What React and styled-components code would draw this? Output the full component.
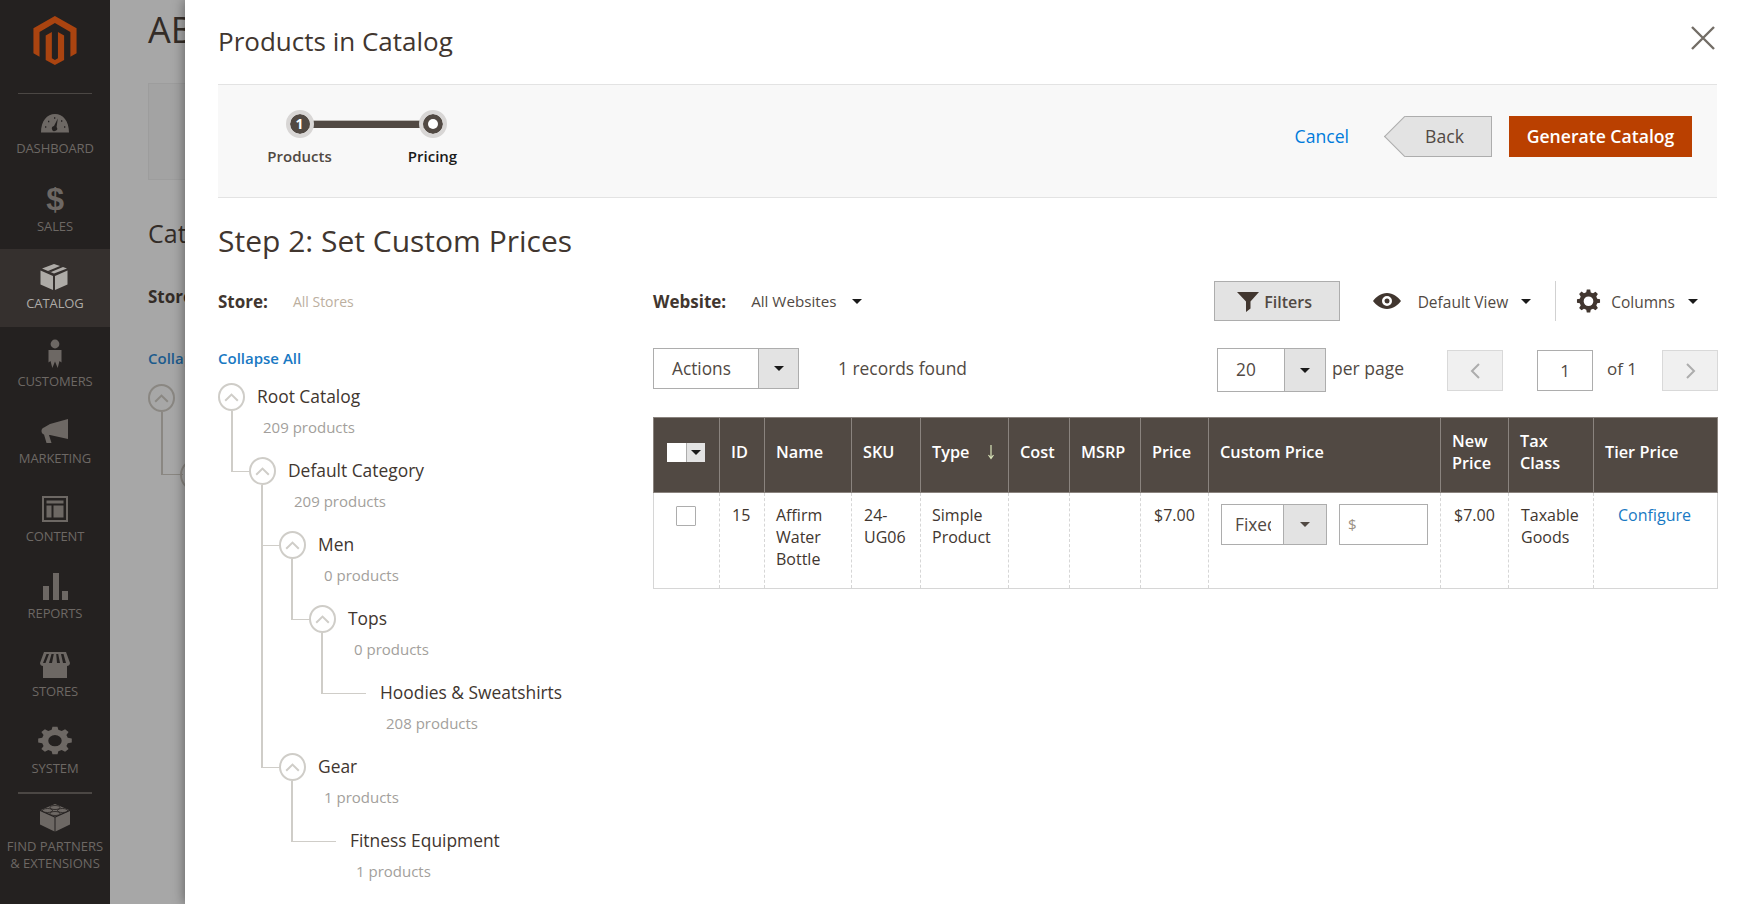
import React from "react";
import styled, { createGlobalStyle } from "styled-components";

const Global = createGlobalStyle`
  html, body { margin: 0; padding: 0; height: 100%; overflow: hidden; }
  body { font-family: "Open Sans", "Liberation Sans", sans-serif; color: #41362f; }
  #root { height: 100%; }
  * { box-sizing: border-box; }
`;

const Page = styled.div`
  position: relative; width: 1749px; height: 904px; overflow: hidden;
  display: flex; background: #a7a7a7;
`;
const Sidebar = styled.nav`
  width: 110px; flex: none; background: #242120; display: flex; flex-direction: column; align-items: stretch;
`;
const LogoWrap = styled.div`
  height: 94px; padding-top: 16px; display: flex; justify-content: center; position: relative;
  &::after { content: ""; position: absolute; left: 18px; right: 18px; bottom: 0; height: 1px; background: #4b4744; }
`;
const NavItem = styled.a`
  height: ${p => p.$tall ? "auto" : "77.5px"};
  display: flex; flex-direction: column; align-items: center; justify-content: flex-end;
  padding-bottom: ${p => p.$tall ? "0" : "14.5px"};
  margin-top: ${p => p.$tall ? "3px" : "0"};
  font-size: 13px; line-height: 17px; letter-spacing: ${p => p.$tall ? "0" : "-0.1px"}; text-align: center; text-transform: uppercase;
  color: ${p => p.$active ? "#aeaba7" : "#6d6864"};
  background: ${p => p.$active ? "#35302e" : "transparent"};
  svg { display: block; margin-bottom: ${p => p.$tall ? "6px" : "4px"}; }
`;
const NavDivider = styled.div`
  height: 2px; margin: 0 18px 5px; background: #4b4744;
`;
const Dollar = styled.span`
  font-family: "Liberation Sans", sans-serif; font-weight: 700; font-size: 32px; line-height: 32px; margin-bottom: 3px;
  color: inherit;
`;

const Behind = styled.main`
  flex: 1; padding: 0 0 0 38px; min-width: 0; color: #332c27;
`;
const BehindTitle = styled.div`
  font-size: 36px; line-height: 48px; padding-top: 6px; height: 83px; white-space: nowrap;
`;
const BehindBar = styled.div`
  height: 97px; background: #a3a3a3; border: 1px solid #9d9d9d; border-right: 0;
`;
const BehindHeading = styled.div`
  font-size: 25px; line-height: 34px; margin-top: 36px; font-weight: 500;
`;
const BehindStore = styled.div`
  font-size: 17px; font-weight: 700; line-height: 22px; margin-top: 36px;
`;
const BehindLink = styled.div`
  font-size: 15px; font-weight: 600; line-height: 20px; margin-top: 40px; color: #1c5b8d;
`;
const BehindTree = styled.div`
  position: relative; margin-top: 16px; width: 27px; height: 28px; border: 2px solid #8a8782; border-radius: 50%;
  display: flex; align-items: center; justify-content: center;
  &::before { content: ""; position: absolute; left: 30px; top: 73px; width: 27px; height: 28px; border: 2px solid #8a8782; border-radius: 50%; }
  &::after { content: ""; position: absolute; left: 11px; top: 26px; width: 20px; height: 62px; border-left: 2px solid #8a8782; border-bottom: 1px solid #8a8782; }
`;

const Modal = styled.section`
  position: absolute; left: 185px; top: 0; right: 0; bottom: 0; background: #fff;
  padding: 0 32px 0 33px; box-shadow: 0 0 12px rgba(0,0,0,.45);
`;
const ModalHeader = styled.header`
  height: 84px; display: flex; align-items: center; padding-bottom: 2px;
`;
const ModalTitle = styled.h1`
  margin: 0; font-size: 26px; font-weight: 400; line-height: 36px; color: #41362f;
`;
const Close = styled.button`
  position: absolute; top: 25px; right: 33px; width: 26px; height: 26px; padding: 0; border: 0; background: none;
`;
const WizardBar = styled.div`
  height: 114px; background: #f8f8f8; border-top: 1px solid #e3e3e3; border-bottom: 1px solid #e3e3e3;
  display: flex; align-items: flex-start; justify-content: space-between; padding: 25px 25px 0 15px;
`;
const Steps = styled.div`
  display: flex; position: relative;
  &::before { content: ""; position: absolute; left: 66px; top: 10px; width: 133px; height: 7px; background: #514943; border-top: 1px solid #bdbab6; }
`;
const Step = styled.div`
  width: 133px; display: flex; flex-direction: column; align-items: center; gap: 8px;
  font-size: 15px; font-weight: 600; line-height: 20px; color: ${p => p.$current ? "#1a1a1a" : "#514943"};
`;
const Dot = styled.span`
  position: relative; width: 28px; height: 28px; border-radius: 50%; background: #514943;
  border: 4px solid #d8d6d5; color: #fff; font-size: 14px; font-weight: 700; line-height: 20px; text-align: center;
  background-clip: padding-box;
  ${p => p.$current && `&::after { content: ""; position: absolute; left: 5px; top: 5px; width: 10px; height: 10px; background: #fff; border-radius: 50%; }`}
`;
const WizardActions = styled.div`
  display: flex; align-items: center; margin-top: 6px;
`;
const CancelLink = styled.a`
  font-size: 17.6px; line-height: 38px; padding-bottom: 2px; color: #007bdb; margin-right: 34px;
`;
const BackButton = styled.button`
  position: relative; width: 88px; height: 41px; margin-left: 21px; margin-right: 17px; padding: 0 6px 2px 0;
  background: #e3e3e3; border: 1px solid #adadad; border-left: 0; font: inherit; font-size: 17.6px; color: #514943;
  &::before {
    content: ""; position: absolute; left: -14px; top: 5px; width: 28px; height: 28px; background: #e3e3e3;
    border-left: 1px solid #adadad; border-bottom: 1px solid #adadad; transform: rotate(45deg);
  }
  span { position: relative; }
`;
const PrimaryButton = styled.button`
  height: 41px; width: 183px; padding: 0 0 2px; background: #ba4000; border: 1px solid #ba4000; color: #fff;
  font: inherit; font-size: 17.6px; font-weight: 600;
`;

const StepTitle = styled.h2`
  margin: 0; height: 83px; padding-top: 23px; font-size: 30px; font-weight: 400; line-height: 40px; color: #41362f;
`;
const Columns = styled.div`
  display: grid; grid-template-columns: 435px 1fr;
`;
const LeftColumn = styled.div`
  min-width: 0;
`;
const ScopeRow = styled.div`
  height: 40px; display: flex; align-items: center;
`;
const ScopeLabel = styled.strong`
  font-size: 17px; font-weight: 700; color: #41362f;
`;
const StoreValue = styled.span`
  margin-left: 25px; font-size: 14px; color: #bcaf9f;
`;
const CollapseAll = styled.a`
  display: block; margin-top: 27px; height: 35px; font-size: 15px; font-weight: 600; line-height: 20px; color: #1979c3;
`;
const Tree = styled.ul`
  list-style: none; margin: 0; padding: 0;
`;
const ChildList = styled.ul`
  list-style: none; margin: 0; padding: 0 0 0 ${p => p.$root ? 31 : 30}px;
`;
const Node = styled.li`
  position: relative;
  ${p => p.$child && `
    &::before {
      content: ""; position: absolute; left: -18px; top: -46px; height: 60px;
      width: ${p.$leaf ? "43px" : "18px"};
      border-left: 2px solid #cfcdc8; border-bottom: 1px solid #cfcdc8;
    }
  `}
  ${p => p.$child && !p.$last && `
    &::after { content: ""; position: absolute; left: -18px; top: 14px; bottom: 0; border-left: 2px solid #cfcdc8; }
  `}
`;
const NodeHead = styled.div`
  height: 28px; display: flex; align-items: center; gap: ${p => p.$leaf ? 14 : 12}px;
  font-size: 17.4px; color: #41362f; white-space: nowrap;
`;
const Toggle = styled.span`
  position: relative; width: 27px; height: 28px; flex: none; border-radius: 50%;
  border: 2px solid ${p => p.$hidden ? "transparent" : "#cfcdc8"}; background: ${p => p.$hidden ? "transparent" : "#fff"};
  z-index: 1; display: flex; align-items: center; justify-content: center;
`;
const NodeText = styled.span`
  margin-top: -3px;
`;
const NodeCount = styled.div`
  height: 46px; padding: 6px 0 0 ${p => p.$leaf ? 47 : 45}px; font-size: 15px; line-height: 20px; color: #a39f9c; white-space: nowrap;
`;

const WebsiteRow = styled.div`
  height: 40px; display: flex; align-items: center;
`;
const WebsiteValue = styled.span`
  margin-left: 25px; font-size: 15.2px; color: #514943;
`;
const Caret = styled.span`
  display: inline-block; width: 0; height: 0; flex: none; border-style: solid;
  border-width: 5px 5px 0 5px; border-color: ${p => p.$c || "#1a1a1a"} transparent transparent transparent;
`;
const InlineCaret = styled(Caret)`
  margin-left: ${p => p.$gap || 16}px;
`;
const Spacer = styled.div` flex: 1; `;
const FiltersButton = styled.button`
  width: 126px; height: 40px; display: flex; align-items: center; justify-content: center; gap: 4px; padding: 1px 5px 0 0;
  background: #e3e3e3; border: 1px solid #adadad; font: inherit; font-size: 16px; font-weight: 600; color: #514943;
  margin-right: 32px;
`;
const ToolItem = styled.span`
  display: flex; align-items: center; font-size: 15.5px; color: #514943;
`;
const ToolDivider = styled.span`
  width: 1px; height: 40px; background: #d1d1d1; margin: 0 20px 0 24px;
`;
const ToolLabel = styled.span`
  margin-left: ${p => p.$gap}px; padding-top: 2px;
`;
const ToolEnd = styled.span` width: 20px; flex: none; `;
const PagerGap = styled.span` width: 43px; flex: none; `;
const ActionsRow = styled.div`
  margin-top: 27px; height: 44px; display: flex; align-items: flex-start; margin-bottom: 25px;
`;
const SelectBox = styled.div`
  display: flex; width: ${p => p.$w}px; height: ${p => p.$h}px; border: 1px solid #adadad; background: #fff; flex: none;
`;
const SelectValue = styled.div`
  flex: 1; min-width: 0; overflow: hidden; white-space: nowrap; padding-left: ${p => p.$pad}px;
  font-size: 17.3px; line-height: ${p => p.$h - 2}px; color: #514943;
  margin-right: ${p => p.$clip || 0}px;
`;
const SelectArrow = styled.div`
  width: ${p => p.$w}px; flex: none; background: #e3e3e3; border-left: 1px solid #adadad;
  display: flex; align-items: center; justify-content: center;
`;
const RecordsText = styled.span`
  margin-left: 39px; font-size: 17.4px; line-height: 41px; color: #514943;
`;
const PerPage = styled.span`
  margin-left: 6px; font-size: 17.5px; line-height: 41px; color: #514943;
`;
const PagerButton = styled.button`
  width: 56px; height: 41px; margin-top: 2px; background: #f0f0f0; border: 1px solid #d9d9d9; padding: 0;
  display: flex; align-items: center; justify-content: center; flex: none;
`;
const PageInput = styled.div`
  width: 56px; height: 41px; margin: 2px 0 0 34px; border: 1px solid #adadad; background: #fff; text-align: center;
  font-size: 17px; line-height: 39px; color: #514943; flex: none;
`;
const OfText = styled.span`
  margin: 0 23px 0 14px; font-size: 17px; line-height: 41px; color: #514943; white-space: nowrap; width: 32px;
`;
const Table = styled.table`
  width: 1064px; table-layout: fixed; border-collapse: collapse; font-size: 16px; line-height: 22px;
`;
const Th = styled.th`
  height: 75px; background: #514943; color: #fff; text-align: left; font-weight: 600; font-size: 16.3px;
  padding: 0 6px 6px 11px; border: 1px solid #8a837e; white-space: pre-line; position: relative;
`;
const Td = styled.td`
  height: 96px; vertical-align: top; padding: 11px 6px 0 12px; border: 1px dashed #d6d6d6; color: #41362f;
  border-top: 0; border-bottom: 1px solid #d6d6d6;
  &:first-child { border-left: 1px solid #d6d6d6; }
  &:last-child { border-right: 1px solid #d6d6d6; }
`;
const NameTd = styled(Td)`
  padding-left: 11px;
`;
const PriceTd = styled(Td)`
  padding-left: 13px;
`;
const CenterTd = styled(Td)`
  text-align: center; padding-left: 6px; padding-right: 8px;
`;
const MultiCheck = styled.div`
  display: flex; width: 38px; height: 19px; margin-left: 2px; background: #fff; 
`;
const MultiArrow = styled.div`
  margin-left: auto; width: 19px; height: 19px; background: #e3e3e3; border: 1px solid #adadad; border-width: 0 0 0 1px;
  display: flex; align-items: center; justify-content: center;
`;
const Check = styled.div`
  width: 20px; height: 20px; margin: 2px 0 0 10px; border: 1px solid #adadad; background: #fff; border-radius: 1px;
`;
const SortIcon = styled.svg`
  position: absolute; right: 13px; top: 26px;
`;
const PriceControls = styled.div`
  display: flex; gap: 12px; margin: 0;
`;
const PriceInput = styled.div`
  width: 89px; height: 41px; border: 1px solid #adadad; padding-left: 8px; font-size: 15px; line-height: 39px; color: #9a8f83;
`;
const Link = styled.a` color: #1979c3; `;

const Chevron = ({ c = "#cfcdc8" }) => (
  <svg width="15" height="9" viewBox="0 0 15 9"><path d="M1.200 7.800 7.500 1.600l6.300 6.200" fill="none" stroke={c} strokeWidth="2" /></svg>
);

const TreeNode = ({ name, count, child, last, leaf, root, children }) => (
  <Node $child={child} $last={last} $leaf={leaf}>
    <NodeHead $leaf={leaf}>
      <Toggle $hidden={leaf}>{!leaf && <Chevron />}</Toggle>
      <NodeText>{name}</NodeText>
    </NodeHead>
    <NodeCount $leaf={leaf}>{count} products</NodeCount>
    {children && <ChildList $root={root}>{children}</ChildList>}
  </Node>
);

const I = ({ w = 44, h = 30, vb, children }) => (
  <svg width={w} height={h} viewBox={vb || `0 0 ${w} ${h}`} fill="currentColor">{children}</svg>
);

const navItems = [
  ["Dashboard", <I key="d"><path fillRule="evenodd" d="M8 26.500C8 15 14 8 22 8s14 7 14 18.500zM21 20l3.800-7.500-1.200 8.500a2.600 2.600 0 1 1-2.600-1z" /><path d="M12 21h1.400M15 15.500h1.400M21 12h1.400M28 15h1.400M31 21h1.400" stroke="#242120" strokeWidth="1.300" strokeDasharray="1.300 1" /></I>],
  ["Sales", <Dollar key="s">$</Dollar>],
  ["Catalog", <I key="c"><path d="M21 3 9 7.500l12 5 13-5-4-1.500-12 5-3-1 12-5zM7.500 9.500v14l12.500 5.500V15zM22 15v14l12.500-5.500v-14z" /></I>],
  ["Customers", <I key="cu"><circle cx="22" cy="5" r="4.400" /><path d="M15.500 11h13v12.500l-2-1.500-1.800 7-2.700-6.500-2.700 6.500-1.800-7-2 1.500z" /></I>],
  ["Marketing", <I key="m"><path d="M35 3v20l-18-4h-1l2.500 8h-5l-2.500-8.500c-1.500-.4-2.500-1.800-2.500-3.500s1-3 2.500-3.500L17 8z" /></I>],
  ["Content", <I key="co"><path fillRule="evenodd" d="M9 2h26v26H9zm2 2v22h22V4zm2.500 2.500h17v3h-17zm0 5h5v12h-5zm7 0h10v12h-10z" /></I>],
  ["Reports", <I key="r"><path d="M10 15h6v14h-6zM20 2h6v27h-6zM29 20h6v9h-6z" /></I>],
  ["Stores", <I key="st"><path fillRule="evenodd" d="M11 3h22l4 11c0 2-1.500 3-3 3v12H10V17c-1.500 0-3-1-3-3zm2.500 2L10 14h2.500l3.500-9zm5 0L16 14h3l1.800-9zm4.700 0L24 14h3l-1.800-9zm4.800 0L30 14h3l-2.500-9z" /></I>],
  ["System", <I key="sy"><path fillRule="evenodd" d="M19 1h6l1 4.500 4 1.600 4-2.600 4.200 4.200-2.600 4 1.600 4 4.800 1v6l-4.800 1-1.600 4 2.600 4-4.200 4.200-4-2.600-4 1.600-1 4.500h-6l-1-4.500-4-1.600-4 2.600-4.200-4.200 2.600-4-1.600-4-4.800-1v-6l4.800-1 1.600-4-2.600-4L10 4.500l4 2.600 4-1.600zM22 13a8 8 0 1 0 0 16 8 8 0 0 0 0-16z" transform="translate(3.500 0) scale(.84 .7)" /></I>],
];

const Logo = () => (
  <svg width="44" height="49" viewBox="0 0 44 50" fill="#aa4410">
    <path d="M21.900 0 0 12.600V37.900l6.200 3.600V16.300l15.700-9.100 15.800 9.100V41.500l6.300-3.600V12.600z" />
    <path d="M25 43l-3.100 1.800L18.800 43V16.300l-6.300 3.600V44.800L21.900 50l9.400-5.200V19.900L25 16.300z" />
  </svg>
);

const Lego = () => (
  <I><path d="M22.500 15.500 37 9v13.500L22.500 29.500zM21.500 15.500v14L7 22.500V9zM8 8l14-6 14 6-14 6.500z" /><path d="M17 5.500c0-1.200 2.200-2 5-2s5 .8 5 2-2.200 2-5 2-5-.8-5-2zM24.500 8.500c0-1.200 2.200-2 5-2s5 .8 5 2-2.200 2-5 2-5-.8-5-2zM9.500 8.500c0-1.200 2.200-2 5-2s5 .8 5 2-2.200 2-5 2-5-.8-5-2zM17 11.500c0-1.200 2.200-2 5-2s5 .8 5 2-2.200 2-5 2-5-.8-5-2z" stroke="#242120" strokeWidth=".8" /></I>
);

const columns = [66, 45, 87, 69, 88, 61, 71, 68, 232, 68, 85, 124];

export default function App() {
  return (
    <Page>
      <Global />
      <Sidebar>
        <LogoWrap><Logo /></LogoWrap>
        {navItems.map(([label, icon]) => (
          <NavItem key={label} $active={label === "Catalog"}>{icon}{label}</NavItem>
        ))}
        <NavDivider />
        <NavItem $tall><Lego />Find Partners<br />&amp; Extensions</NavItem>
      </Sidebar>

      <Behind>
        <BehindTitle>AB</BehindTitle>
        <BehindBar />
        <BehindHeading>Cat</BehindHeading>
        <BehindStore>Store</BehindStore>
        <BehindLink>Collapse</BehindLink>
        <BehindTree><Chevron c="#8a8782" /></BehindTree>
      </Behind>

      <Modal>
        <ModalHeader><ModalTitle>Products in Catalog</ModalTitle></ModalHeader>
        <Close aria-label="Close">
          <svg width="26" height="26" viewBox="0 0 26 26"><path d="M2 2l22 22M24 2 2 24" stroke="#736d66" strokeWidth="2.400" /></svg>
        </Close>
        <WizardBar>
          <Steps>
            <Step><Dot>1</Dot>Products</Step>
            <Step $current><Dot $current />Pricing</Step>
          </Steps>
          <WizardActions>
            <CancelLink>Cancel</CancelLink>
            <BackButton><span>Back</span></BackButton>
            <PrimaryButton>Generate Catalog</PrimaryButton>
          </WizardActions>
        </WizardBar>
        <StepTitle>Step 2: Set Custom Prices</StepTitle>
        <Columns>
          <LeftColumn>
            <ScopeRow>
              <ScopeLabel>Store:</ScopeLabel>
              <StoreValue>All Stores</StoreValue>
            </ScopeRow>
            <CollapseAll>Collapse All</CollapseAll>
            <Tree>
              <TreeNode root name="Root Catalog" count="209">
                <TreeNode child last name="Default Category" count="209">
                  <TreeNode child name="Men" count="0">
                    <TreeNode child last name="Tops" count="0">
                      <TreeNode child last leaf name="Hoodies & Sweatshirts" count="208" />
                    </TreeNode>
                  </TreeNode>
                  <TreeNode child last name="Gear" count="1">
                    <TreeNode child last leaf name="Fitness Equipment" count="1" />
                  </TreeNode>
                </TreeNode>
              </TreeNode>
            </Tree>
          </LeftColumn>
          <div>
            <WebsiteRow>
              <ScopeLabel>Website:</ScopeLabel>
              <WebsiteValue>All Websites</WebsiteValue>
              <InlineCaret />
              <Spacer />
              <FiltersButton>
                <svg width="24" height="22" viewBox="0 0 24 22"><path d="M1 1h22l-8.500 9.500v7L10 21v-10.500z" fill="#41362f" /></svg>
                Filters
              </FiltersButton>
              <ToolItem>
                <svg width="30" height="18" viewBox="0 0 30 18"><path fillRule="evenodd" d="M15 1c6 0 11 4 14 8-3 4-8 8-14 8S4 13 1 9c3-4 8-8 14-8zm0 3a5 5 0 1 0 0 10 5 5 0 0 0 0-10zm0 2.500a2.500 2.500 0 1 1 0 5 2.500 2.500 0 0 1 0-5z" fill="#41362f" /></svg>
                <ToolLabel $gap={16}>Default View</ToolLabel>
                <InlineCaret $gap={13} />
              </ToolItem>
              <ToolDivider />
              <ToolItem>
                <svg width="25" height="25" viewBox="0 0 44 44"><path fillRule="evenodd" fill="#41362f" d="M19 1h6l1 5 4 1.600 4.300-2.800 4.200 4.200-2.800 4.300L37.300 17l5 1v6l-5 1-1.600 4 2.800 4.300-4.200 4.200-4.300-2.800-4 1.600-1 5h-6l-1-5-4-1.600-4.300 2.800-4.200-4.200 2.800-4.300L6.700 25l-5-1v-6l5-1 1.600-4-2.800-4.300L9.700 4.500 14 7.300l4-1.600zM22 13a8.500 8.500 0 1 0 0 17 8.500 8.500 0 0 0 0-17z" /></svg>
                <ToolLabel $gap={10}>Columns</ToolLabel>
                <InlineCaret $gap={13} />
              </ToolItem>
              <ToolEnd />
            </WebsiteRow>
            <ActionsRow>
              <SelectBox $w={146} $h={41}>
                <SelectValue $pad={18} $h={41}>Actions</SelectValue>
                <SelectArrow $w={40}><Caret /></SelectArrow>
              </SelectBox>
              <RecordsText>1 records found</RecordsText>
              <Spacer />
              <SelectBox $w={109} $h={44}>
                <SelectValue $pad={18} $h={44}>20</SelectValue>
                <SelectArrow $w={41}><Caret /></SelectArrow>
              </SelectBox>
              <PerPage>per page</PerPage>
              <PagerGap />
              <PagerButton><svg width="12" height="20" viewBox="0 0 12 20"><path d="M10 3 3 10l7 7" fill="none" stroke="#adadad" strokeWidth="2" /></svg></PagerButton>
              <PageInput>1</PageInput>
              <OfText>of 1</OfText>
              <PagerButton><svg width="12" height="20" viewBox="0 0 12 20"><path d="m3 3 7 7-7 7" fill="none" stroke="#adadad" strokeWidth="2" /></svg></PagerButton>
            </ActionsRow>
            <Table>
              <colgroup>{columns.map((c, i) => <col key={i} width={c} />)}</colgroup>
              <thead>
                <tr>
                  <Th><MultiCheck><MultiArrow><Caret /></MultiArrow></MultiCheck></Th>
                  <Th>ID</Th>
                  <Th>Name</Th>
                  <Th>SKU</Th>
                  <Th>Type
                    <SortIcon width="8" height="16" viewBox="0 0 8 16"><path d="M4 1v13M1.500 11 4 14.500 6.500 11" fill="none" stroke="#d8e3b8" strokeWidth="1.200" /></SortIcon>
                  </Th>
                  <Th>Cost</Th>
                  <Th>MSRP</Th>
                  <Th>Price</Th>
                  <Th>Custom Price</Th>
                  <Th>{"New\nPrice"}</Th>
                  <Th>{"Tax\nClass"}</Th>
                  <Th>Tier Price</Th>
                </tr>
              </thead>
              <tbody>
                <tr>
                  <Td><Check /></Td>
                  <Td>15</Td>
                  <NameTd>Affirm Water Bottle</NameTd>
                  <Td>24-UG06</Td>
                  <NameTd>Simple Product</NameTd>
                  <Td />
                  <Td />
                  <PriceTd>$7.00</PriceTd>
                  <Td>
                    <PriceControls>
                      <SelectBox $w={106} $h={41}>
                        <SelectValue $pad={13} $h={41} $clip={12}>Fixed Price</SelectValue>
                        <SelectArrow $w={43}><Caret $c="#514943" /></SelectArrow>
                      </SelectBox>
                      <PriceInput>$</PriceInput>
                    </PriceControls>
                  </Td>
                  <PriceTd>$7.00</PriceTd>
                  <Td>Taxable Goods</Td>
                  <CenterTd><Link>Configure</Link></CenterTd>
                </tr>
              </tbody>
            </Table>
          </div>
        </Columns>
      </Modal>
    </Page>
  );
}
